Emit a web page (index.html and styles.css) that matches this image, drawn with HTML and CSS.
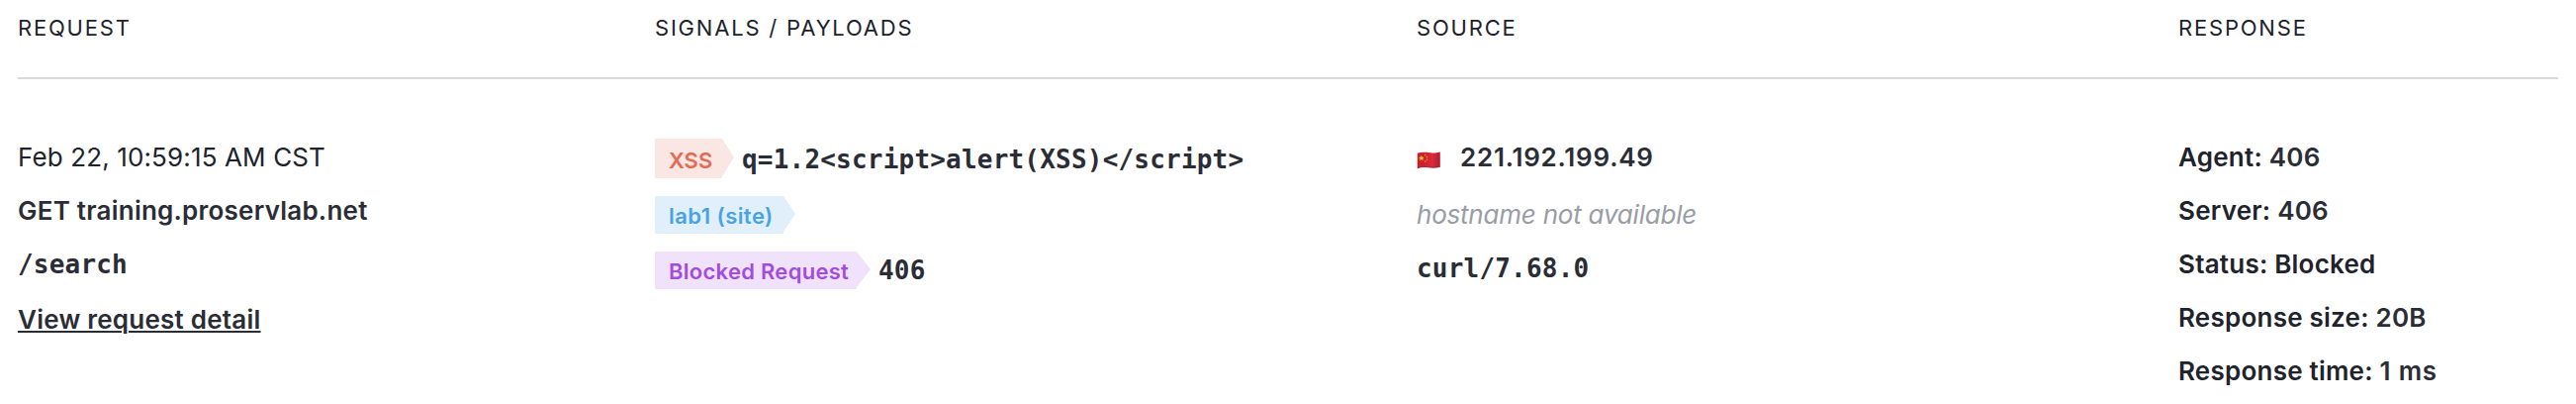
FILE: index.html
```
<!DOCTYPE html>
<html lang="en">
<head>
<meta charset="utf-8">
<title>Requests</title>
<link rel="stylesheet" href="styles.css">
</head>
<body>
<main class="requests">
  <header class="grid head">
    <div>REQUEST</div>
    <div>SIGNALS / PAYLOADS</div>
    <div>SOURCE</div>
    <div>RESPONSE</div>
  </header>
  <section class="grid entry">
    <div class="col">
      <div class="line date">Feb 22, 10:59:15 AM CST</div>
      <div class="line strong">GET training.proservlab.net</div>
      <div class="line mono">/search</div>
      <div class="line strong detail"><a class="link" href="#">View request detail</a></div>
    </div>
    <div class="col signals">
      <div class="signal"><span class="tag tag-xss">XSS</span><span class="mono">q=1.2&lt;script&gt;alert(XSS)&lt;/script&gt;</span></div>
      <div class="signal"><span class="tag tag-site">lab1 (site)</span></div>
      <div class="signal"><span class="tag tag-blocked">Blocked Request</span><span class="mono">406</span></div>
    </div>
    <div class="col">
      <div class="line strong ip">
        <svg class="flag" viewBox="0 0 24 18" width="24" height="18">
          <defs>
            <linearGradient id="cloth" x1="0" x2="1" y1="0" y2="0">
              <stop offset="0" stop-color="#c8202c"/>
              <stop offset=".3" stop-color="#d0202f"/>
              <stop offset=".65" stop-color="#d92b3c"/>
              <stop offset="1" stop-color="#b51c2c"/>
            </linearGradient>
          </defs>
          <path d="M.8 1.8C4 .6 8 .6 12 1.1S20 1.6 23.8 .6V15.6C20 16.8 16 16.6 12 16.1S4 15.8 .8 17.2Z" fill="url(#cloth)"/>
          <path d="M.8 16.7C4 15.3 8 15.3 12 15.8S20 16.3 23.8 15.2" fill="none" stroke="#8e2430" stroke-width=".8"/>
          <path d="M4.9 4l.8 1.8 2 .1-1.5 1.3.5 2-1.8-1.1-1.8 1.1.5-2-1.5-1.3 2-.1Z" fill="#f8d21c"/>
          <g fill="#e8901f"><circle cx="8.8" cy="3.6" r=".8"/><circle cx="10.5" cy="5.6" r=".8"/><circle cx="10.5" cy="8.2" r=".8"/><circle cx="8.8" cy="10.1" r=".8"/></g>
        </svg>
        <span>221.192.199.49</span>
      </div>
      <div class="line hostname">hostname not available</div>
      <div class="line mono">curl/7.68.0</div>
    </div>
    <div class="col">
      <div class="line strong label">Agent: <span class="value">406</span></div>
      <div class="line strong label">Server: <span class="value">406</span></div>
      <div class="line strong label">Status: Blocked</div>
      <div class="line strong label">Response size: <span class="value">20B</span></div>
      <div class="line strong label">Response time: <span class="value duration">1 ms</span></div>
    </div>
  </section>
</main>
</body>
</html>
```
FILE: styles.css
```
body {
  margin: 0;
  background: #fff;
  color: #20222c;
  font-family: Inter, "Liberation Sans", sans-serif;
  font-size: 26px;
  overflow: hidden;
}

.requests {
  padding: 0 18px;
}

.grid {
  display: grid;
  grid-template-columns: 644px 770px 770px 384px;
}

.head {
  height: 78px;
  border-bottom: 2px solid #d8d8de;
  font-size: 22px;
  line-height: 56px;
  letter-spacing: 1.8px;
}

.entry {
  padding-top: 52px;
}

.line {
  height: 54px;
  line-height: 54px;
  white-space: nowrap;
}

.date {
  letter-spacing: 0.13px;
}

.strong {
  font-weight: 600;
  letter-spacing: 0.23px;
  color: #2b2d36;
}

.label {
  color: #20222c;
}

.value {
  color: #2b2d36;
}

.duration {
  letter-spacing: 0.8px;
}

.mono {
  font-family: "DejaVu Sans Mono", monospace;
  font-weight: 700;
  letter-spacing: 0.2px;
  color: #2b2d36;
}

.detail {
  padding-top: 2px;
}

.link {
  color: inherit;
  text-decoration: underline;
  text-decoration-thickness: 2px;
  text-underline-offset: 2px;
}

.signals {
  display: flex;
  flex-direction: column;
  gap: 18px;
  padding-top: 8px;
}

.signal {
  display: flex;
  align-items: center;
  gap: 8px;
  height: 38px;
  white-space: nowrap;
}

.signal:first-child {
  height: 40px;
}

.signal:first-child .mono {
  padding-top: 2px;
}

.tag {
  --arrow: 12px;
  box-sizing: border-box;
  height: 100%;
  padding-left: 14px;
  font-size: 22px;
  font-weight: 600;
  line-height: 40px;
  clip-path: polygon(0 0, calc(100% - var(--arrow)) 0, 100% calc(50% - 1px), calc(100% - var(--arrow)) calc(100% - 2px), calc(100% - var(--arrow)) 100%, 0 100%);
}

.tag-xss {
  width: 80px;
  line-height: 44px;
  background: #fae6e3;
  color: #e56a54;
}

.tag-site {
  width: 142px;
  letter-spacing: 0.45px;
  background: #e1effb;
  color: #47a3e5;
}

.tag-blocked {
  --arrow: 14px;
  width: 218px;
  letter-spacing: 0.28px;
  background: #f0e2fa;
  color: #a24ddf;
}

.ip {
  display: flex;
  align-items: center;
  gap: 20px;
  letter-spacing: 0.77px;
}

.flag {
  margin-top: 5px;
}

.hostname {
  padding-top: 4px;
  font-style: italic;
  letter-spacing: -0.22px;
  color: #9a9ca6;
}
```
